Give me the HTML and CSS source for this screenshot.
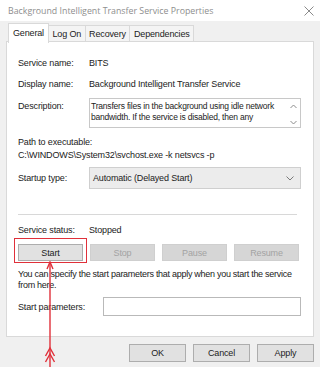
FILE: index.html
```html
<!DOCTYPE html>
<html lang="en">
<head>
    <meta charset="UTF-8">
    <title>Background Intelligent Transfer Service Properties</title>
    <link rel="stylesheet" href="styles.css">
</head>
<body>

<div class="window">
    <!-- Title bar -->
    <div class="titlebar">
        <span class="title">Background Intelligent Transfer Service Properties</span>
        <svg class="close" width="10" height="10" viewBox="0 0 10 10">
            <path d="M0.5 0.5 L9.5 9.5 M9.5 0.5 L0.5 9.5" stroke="#8a8a8a" stroke-width="1" fill="none"/>
        </svg>
    </div>

    <!-- Tabs -->
    <div class="tabs">
        <div class="tab active">General</div>
        <div class="tab">Log On</div>
        <div class="tab">Recovery</div>
        <div class="tab">Dependencies</div>
    </div>

    <div class="panel">
        <div class="row first">
            <span class="label">Service name:</span>
            <span class="value">BITS</span>
        </div>
        <div class="row">
            <span class="label">Display name:</span>
            <span class="value">Background Intelligent Transfer Service</span>
        </div>
        <div class="row desc-row">
            <span class="label desc-label">Description:</span>
            <div class="textbox">
                <div class="textbox-text">Transfers files in the background using idle network bandwidth. If the service is disabled, then any</div>
                <div class="scroll">
                    <svg width="7" height="5" viewBox="0 0 7 5"><path d="M0.5 4 L3.5 1 L6.5 4" stroke="#8c8c8c" fill="none"/></svg>
                    <svg width="7" height="5" viewBox="0 0 7 5"><path d="M0.5 1 L3.5 4 L6.5 1" stroke="#8c8c8c" fill="none"/></svg>
                </div>
            </div>
        </div>

        <div class="path-label">Path to executable:</div>
        <div class="path-value">C:\WINDOWS\System32\svchost.exe -k netsvcs -p</div>

        <div class="row startup-row">
            <span class="label">Startup type:</span>
            <div class="select">
                <span>Automatic (Delayed Start)</span>
                <svg width="8" height="5" viewBox="0 0 8 5"><path d="M0.5 0.5 L4 4 L7.5 0.5" stroke="#7a7a7a" fill="none"/></svg>
            </div>
        </div>

        <div class="separator"></div>

        <div class="row status-row">
            <span class="label">Service status:</span>
            <span class="value">Stopped</span>
        </div>

        <div class="control-buttons">
            <button class="btn">Start</button>
            <button class="btn disabled">Stop</button>
            <button class="btn disabled">Pause</button>
            <button class="btn disabled">Resume</button>
        </div>

        <p class="hint">You can specify the start parameters that apply when you start the service from here.</p>

        <div class="row params-row">
            <span class="label params-label">Start parameters:</span>
            <div class="input"></div>
        </div>
    </div>

    <!-- Dialog buttons -->
    <div class="footer">
        <button class="btn footer-btn">OK</button>
        <button class="btn footer-btn">Cancel</button>
        <button class="btn footer-btn">Apply</button>
    </div>

    <!-- Red annotation over the Start button -->
    <div class="highlight"></div>
    <svg class="arrow" width="20" height="106" viewBox="0 0 20 106">
        <path d="M10 2 L10 106" stroke="#e0303a" stroke-width="1.4" fill="none"/>
        <path d="M7 8 L10 1 L13 8" stroke="#e0303a" stroke-width="1.4" fill="none"/>
        <path d="M5.5 95 L10 87 L14.5 95" stroke="#e0303a" stroke-width="1.4" fill="none"/>
        <path d="M5.5 101 L10 93 L14.5 101" stroke="#e0303a" stroke-width="1.4" fill="none"/>
    </svg>
</div>

</body>
</html>
```

FILE: styles.css
```css
body {
    margin: 0;
    padding: 0;
    font-family: "Liberation Sans", Arial, sans-serif;
    font-size: 9px;
    letter-spacing: -0.15px;
    color: #222;
    background-color: #f0f0f0;
}
.window {
    position: relative;
    width: 320px;
    height: 367px;
    overflow: hidden;
}
.titlebar {
    height: 21px;
    background-color: #fff;
    display: flex;
    align-items: center;
    justify-content: space-between;
    padding: 0 6px 0 8px;
}
.title {
    font-family: "Open Sans", sans-serif;
    font-size: 8.8px;
    letter-spacing: 0;
    color: #8e8e8e;
}
.close {
    margin-top: 1px;
}
.tabs {
    display: flex;
    margin: 3px 0 0 8px;
    height: 17px;
    position: relative;
    z-index: 1;
}
.tab {
    border: 1px solid #d9d9d9;
    border-bottom: none;
    border-left: none;
    padding: 0 3.5px;
    line-height: 16px;
    margin-top: 1px;
    background-color: #f4f4f4;
}
.tab.active {
    background-color: #fff;
    border-left: 1px solid #d9d9d9;
    margin-top: -1px;
    line-height: 19px;
    height: 19px;
    padding: 0 4px;
}
.panel {
    margin: 0 6px;
    height: 296px;
    background-color: #fff;
    border: 1px solid #d9d9d9;
    padding: 0 14px 0 11px;
    box-sizing: border-box;
}
.row {
    display: flex;
    align-items: center;
    height: 12px;
    margin-top: 9px;
}
.row.first {
    margin-top: 15px;
}
.label {
    width: 71px;
    flex-shrink: 0;
}
.desc-row {
    align-items: flex-start;
    height: 30px;
    margin-top: 8px;
}
.desc-label {
    padding-top: 3px;
}
.textbox {
    flex: 1;
    height: 30px;
    border: 1px solid #c8c8c8;
    box-sizing: border-box;
    display: flex;
    margin-right: -2px;
}
.textbox-text {
    flex: 1;
    padding: 2px 0 0 1px;
    line-height: 11px;
    font-size: 8.5px;
    letter-spacing: -0.2px;
}
.scroll {
    width: 13px;
    display: flex;
    flex-direction: column;
    justify-content: space-between;
    align-items: center;
    padding: 5px 0 2px;
}
.path-label {
    margin-top: 8px;
    line-height: 12px;
}
.path-value {
    margin-top: 1px;
    line-height: 12px;
}
.startup-row {
    height: 22px;
    margin-top: 6px;
}
.select {
    flex: 1;
    height: 22px;
    margin-right: -2px;
    border: 1px solid #cfcfcf;
    background-color: #ececec;
    box-sizing: border-box;
    display: flex;
    align-items: center;
    justify-content: space-between;
    padding: 0 6px 0 3px;
}
.separator {
    margin: 25px 2px 0 0;
    border-top: 1px solid #d8d8d8;
}
.status-row {
    margin-top: 9px;
}
.control-buttons {
    display: flex;
    justify-content: space-between;
    margin-top: 8px;
}
.btn {
    font-family: "Liberation Sans", Arial, sans-serif;
    font-size: 9px;
    letter-spacing: -0.15px;
    color: #222;
    width: 65px;
    height: 17px;
    padding: 0;
    background-color: #e1e1e1;
    border: 1px solid #adadad;
}
.btn.disabled {
    background-color: #d6d6d6;
    border-color: #cfcfcf;
    color: #a3a3a3;
}
.hint {
    margin: 8px 0 0;
    line-height: 11px;
    letter-spacing: -0.28px;
}
.params-row {
    height: 19px;
    margin-top: 6px;
}
.params-label {
    width: 85px;
}
.input {
    flex: 1;
    height: 19px;
    margin-right: -2px;
    border: 1px solid #b9b9b9;
    box-sizing: border-box;
}
.footer {
    display: flex;
    justify-content: flex-end;
    gap: 7px;
    margin: 7px 6px 0 0;
}
.footer-btn {
    width: 57px;
    height: 18px;
}
.highlight {
    position: absolute;
    left: 14px;
    top: 238px;
    width: 73px;
    height: 25px;
    border: 1.5px solid #e0303a;
    box-sizing: border-box;
}
.arrow {
    position: absolute;
    left: 40px;
    top: 261px;
}
```
